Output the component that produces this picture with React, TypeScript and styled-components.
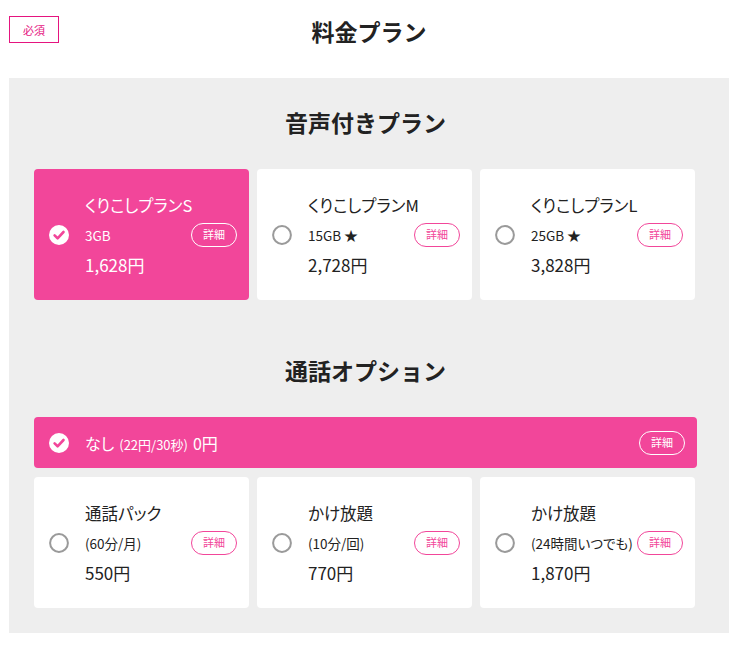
import React from 'react';
import styled, { createGlobalStyle, css } from 'styled-components';

const PINK = '#f2469a';

const Global = createGlobalStyle`
  body {
    margin: 0;
    background: #fff;
    color: #222;
    font-family: "Noto Sans CJK JP", "Noto Sans", sans-serif;
  }
`;

const Page = styled.div`
  width: 720px;
  margin-left: 9px;
`;

const Header = styled.header`
  display: grid;
  grid-template-columns: 1fr auto 1fr;
  align-items: start;
  height: 78px;
  padding-top: 16px;
  box-sizing: border-box;
`;

const Badge = styled.span`
  justify-self: start;
  display: flex;
  align-items: center;
  justify-content: center;
  width: 50px;
  height: 27px;
  box-sizing: border-box;
  border: 1px solid #e5147f;
  color: #e5147f;
  font-size: 11px;
`;

const PageTitle = styled.h1`
  margin: 0;
  font-size: 23px;
  font-weight: 700;
  line-height: 30px;
`;

const Panel = styled.section`
  background: #eeeeee;
  padding: 26px 32px 25px 25px;
`;

const SectionTitle = styled.h2<{ $gap?: number }>`
  margin: ${({ $gap }) => $gap ?? 0}px 0 29px;
  text-align: center;
  font-size: 23px;
  font-weight: 700;
  line-height: 36px;
`;

const Grid = styled.div`
  display: grid;
  grid-template-columns: repeat(3, 215px);
  column-gap: 8px;
`;

const selectedStyle = css`
  background: ${PINK};
  color: #fff;
`;

const Card = styled.div<{ $selected?: boolean }>`
  display: flex;
  align-items: center;
  height: 131px;
  padding: 0 12px 0 15px;
  box-sizing: border-box;
  border-radius: 4px;
  background: #fff;
  color: #222;
  font-feature-settings: "palt";
  ${({ $selected }) => $selected && selectedStyle}
`;

const WideCard = styled(Card)`
  height: 51px;
  margin-bottom: 9px;
`;

const Body = styled.div`
  flex: 1;
  margin-left: 16px;
  display: flex;
  flex-direction: column;
  gap: 6px;
`;

const Name = styled.div`
  font-size: 16.5px;
  line-height: 24px;
`;

const SubRow = styled.div`
  display: flex;
  align-items: center;
  justify-content: space-between;
  gap: 4px;
  font-size: 13.5px;
  line-height: 24px;
  white-space: nowrap;
`;

const Price = styled.div`
  font-size: 17px;
  line-height: 24px;
`;

const Inline = styled.div`
  flex: 1;
  margin-left: 16px;
  font-size: 16px;
  display: flex;
  align-items: baseline;
  gap: 5px;
`;

const Small = styled.span`
  font-size: 13px;
`;

const Detail = styled.button<{ $inverse?: boolean }>`
  flex: none;
  width: 46px;
  height: 24px;
  padding: 0;
  border-radius: 12px;
  font-family: inherit;
  font-size: 11px;
  line-height: 1;
  background: transparent;
  border: 1px solid ${({ $inverse }) => ($inverse ? '#fff' : PINK)};
  color: ${({ $inverse }) => ($inverse ? '#fff' : PINK)};
`;

const Mark = ({ on }: { on?: boolean }) =>
  on ? (
    <svg width="20" height="20" viewBox="0 0 20 20">
      <circle cx="10" cy="10" r="10" fill="#fff" />
      <path d="M5.6 10.4 L8.6 13.3 L14.5 7" fill="none" stroke={PINK} strokeWidth="2.6" strokeLinecap="round" strokeLinejoin="round" />
    </svg>
  ) : (
    <svg width="20" height="20" viewBox="0 0 20 20">
      <circle cx="10" cy="10" r="8.9" fill="#fff" stroke="#9a9a9a" strokeWidth="2" />
    </svg>
  );

type Item = { name: string; sub: string; price: string; selected?: boolean };

const plans: Item[] = [
  { name: 'くりこしプランS', sub: '3GB', price: '1,628円', selected: true },
  { name: 'くりこしプランM', sub: '15GB ★', price: '2,728円' },
  { name: 'くりこしプランL', sub: '25GB ★', price: '3,828円' },
];

const options: Item[] = [
  { name: '通話パック', sub: '(60分/月)', price: '550円' },
  { name: 'かけ放題', sub: '(10分/回)', price: '770円' },
  { name: 'かけ放題', sub: '(24時間いつでも)', price: '1,870円' },
];

const ChoiceCard = ({ item }: { item: Item }) => (
  <Card $selected={item.selected}>
    <Mark on={item.selected} />
    <Body>
      <Name>{item.name}</Name>
      <SubRow>
        <span>{item.sub}</span>
        <Detail $inverse={item.selected}>詳細</Detail>
      </SubRow>
      <Price>{item.price}</Price>
    </Body>
  </Card>
);

export default function App() {
  return (
    <Page>
      <Global />
      <Header>
        <Badge>必須</Badge>
        <PageTitle>料金プラン</PageTitle>
      </Header>
      <Panel>
        <SectionTitle>音声付きプラン</SectionTitle>
        <Grid>
          {plans.map((p) => (
            <ChoiceCard key={p.name} item={p} />
          ))}
        </Grid>
        <SectionTitle $gap={52}>通話オプション</SectionTitle>
        <WideCard $selected>
          <Mark on />
          <Inline>
            なし <Small>(22円/30秒)</Small> 0円
          </Inline>
          <Detail $inverse>詳細</Detail>
        </WideCard>
        <Grid>
          {options.map((o) => (
            <ChoiceCard key={o.sub} item={o} />
          ))}
        </Grid>
      </Panel>
    </Page>
  );
}
